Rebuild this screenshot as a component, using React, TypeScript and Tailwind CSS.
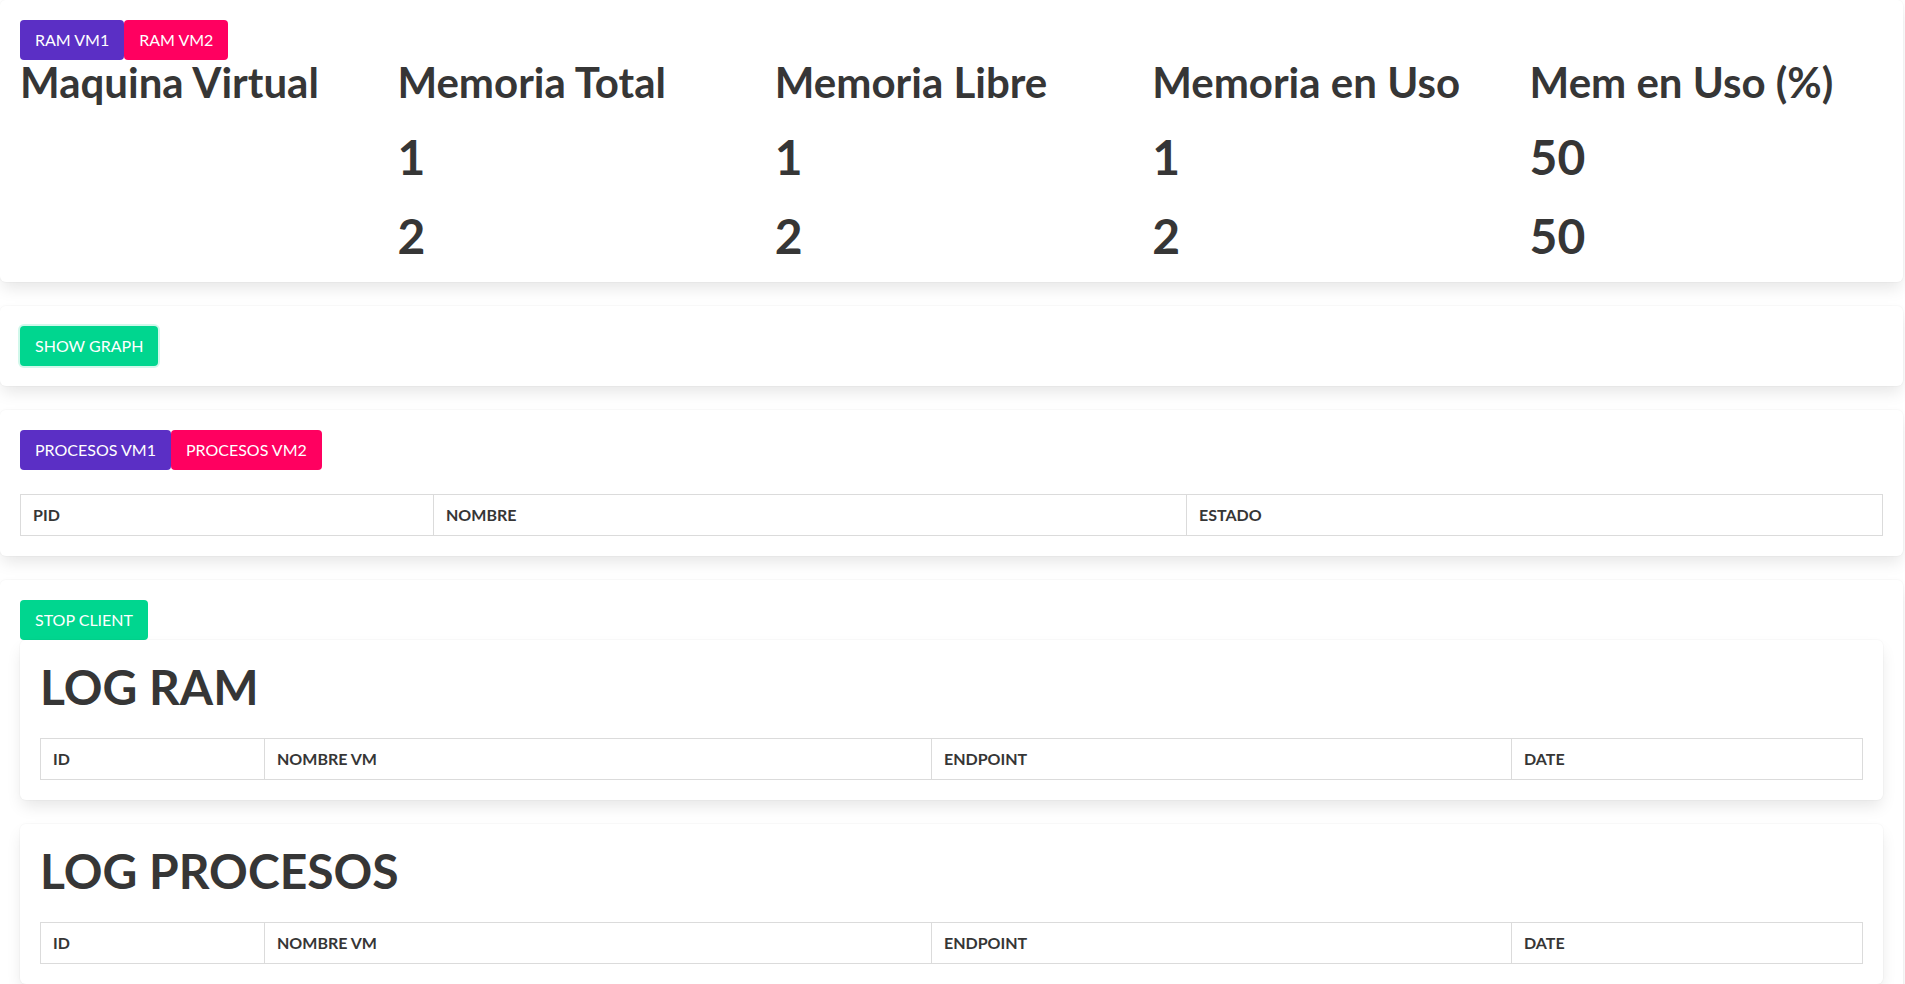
const box =
  "rounded-md bg-white shadow-[0_8px_16px_-2px_rgba(10,10,10,0.1),0_0_0_1px_rgba(10,10,10,0.02)] p-5";

const btn = "h-10 px-[14px] rounded-[4px] text-white text-base leading-6 border border-transparent";

const memHeaders = ["Maquina Virtual", "Memoria Total", "Memoria Libre", "Memoria en Uso", "Mem en Uso (%)"];
const memRows = [
  ["", "1", "1", "1", "50"],
  ["", "2", "2", "2", "50"],
];

function HeaderTable({ cols }: { cols: { label: string; w: string }[] }) {
  return (
    <table className="w-full border-collapse table-fixed">
      <thead>
        <tr>
          {cols.map((c) => (
            <th
              key={c.label}
              className={`${c.w} border border-[#dbdbdb] px-3 py-2 text-left text-base leading-6 font-bold text-[#363636]`}
            >
              {c.label}
            </th>
          ))}
        </tr>
      </thead>
    </table>
  );
}

function LogBox({ title }: { title: string }) {
  return (
    <div className={box}>
      <h1 className="text-[48px] leading-[54px] font-bold text-[#363636] mb-6">{title}</h1>
      <HeaderTable
        cols={[
          { label: "ID", w: "w-[224px]" },
          { label: "NOMBRE VM", w: "w-[667px]" },
          { label: "ENDPOINT", w: "w-[580px]" },
          { label: "DATE", w: "w-auto" },
        ]}
      />
    </div>
  );
}

export default function App() {
  return (
    <div className="min-h-screen bg-white font-['Lato','Open_Sans',sans-serif] text-[#363636] pr-[2px]">
      {/* RAM */}
      <div className={`${box} pb-[7px] mb-6`}>
        <div className="flex">
          <button className={`${btn} bg-[#5b2fc5]`}>RAM VM1</button>
          <button className={`${btn} bg-[#ff0060]`}>RAM VM2</button>
        </div>
        <div className="grid grid-cols-5 gap-x-6">
          {memHeaders.map((h) => (
            <div key={h} className="text-[42px] leading-[45px] font-bold whitespace-nowrap">
              {h}
            </div>
          ))}
        </div>
        <div className="mt-3 grid grid-cols-5 gap-x-6">
          {memRows.flatMap((r, i) =>
            r.map((v, j) => (
              <div key={`${i}-${j}`} className="text-[48px] leading-[79px] font-bold h-[79px]">
                {v}
              </div>
            ))
          )}
        </div>
      </div>

      {/* Graph */}
      <div className={`${box} mb-6`}>
        <button className={`${btn} bg-[#00d68f] shadow-[0_0_0_2px_rgba(0,214,143,0.18)]`}>SHOW GRAPH</button>
      </div>

      {/* Procesos */}
      <div className={`${box} mb-6`}>
        <div className="flex mb-6">
          <button className={`${btn} bg-[#5b2fc5]`}>PROCESOS VM1</button>
          <button className={`${btn} bg-[#ff0060]`}>PROCESOS VM2</button>
        </div>
        <HeaderTable
          cols={[
            { label: "PID", w: "w-[413px]" },
            { label: "NOMBRE", w: "w-[753px]" },
            { label: "ESTADO", w: "w-auto" },
          ]}
        />
      </div>

      {/* Logs */}
      <div className={box}>
        <button className={`${btn} bg-[#00d68f]`}>STOP CLIENT</button>
        <div className="flex flex-col gap-6">
          <LogBox title="LOG RAM" />
          <LogBox title="LOG PROCESOS" />
        </div>
      </div>
    </div>
  );
}
